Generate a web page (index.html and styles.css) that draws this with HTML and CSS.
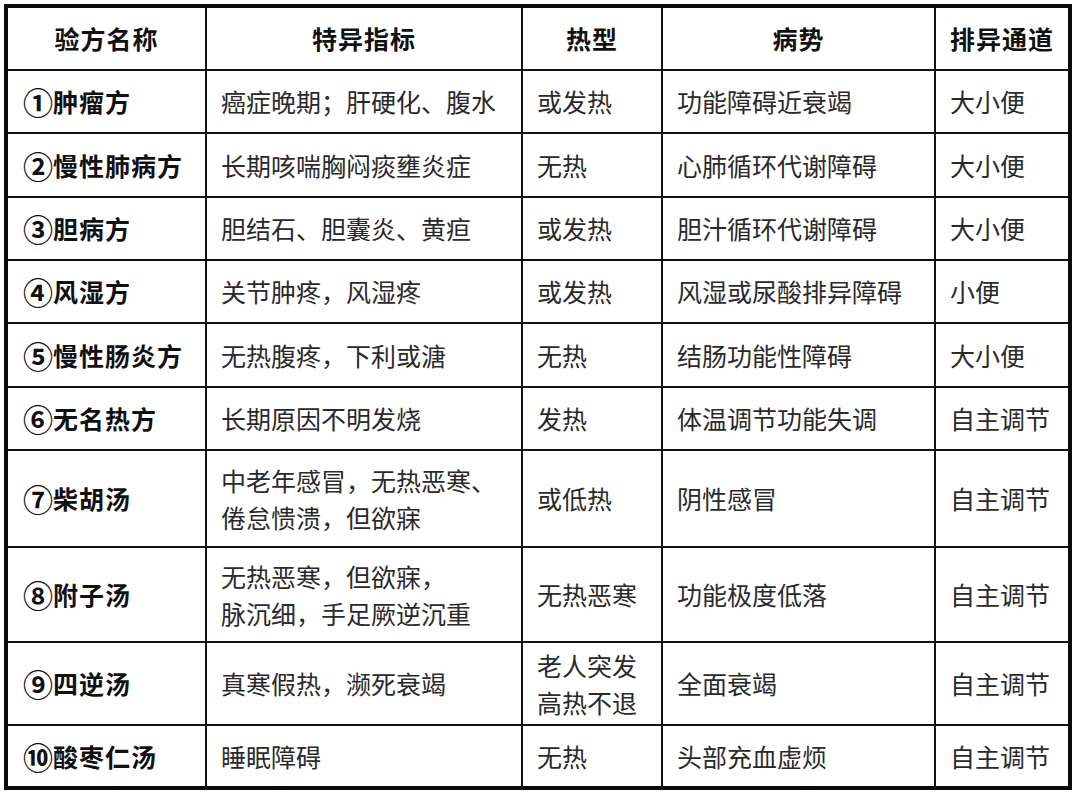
FILE: index.html
```html
<!DOCTYPE html>
<html lang="zh-CN">
<head>
<meta charset="utf-8">
<title>验方表</title>
<link rel="stylesheet" href="styles.css">
</head>
<body>
<div class="wrap">
<table class="grid">
  <colgroup>
    <col class="c1"><col class="c2"><col class="c3"><col class="c4"><col class="c5">
  </colgroup>
  <thead>
    <tr class="h64">
      <th>验方名称</th><th>特异指标</th><th>热型</th><th>病势</th><th>排异通道</th>
    </tr>
  </thead>
  <tbody>
    <tr class="h63"><td class="name"><span class="num">①</span>肿瘤方</td><td>癌症晚期；肝硬化、腹水</td><td>或发热</td><td>功能障碍近衰竭</td><td>大小便</td></tr>
    <tr class="h64"><td class="name"><span class="num">②</span>慢性肺病方</td><td>长期咳喘胸闷痰壅炎症</td><td>无热</td><td>心肺循环代谢障碍</td><td>大小便</td></tr>
    <tr class="h63"><td class="name"><span class="num">③</span>胆病方</td><td>胆结石、胆囊炎、黄疸</td><td>或发热</td><td>胆汁循环代谢障碍</td><td>大小便</td></tr>
    <tr class="h63"><td class="name"><span class="num">④</span>风湿方</td><td>关节肿疼，风湿疼</td><td>或发热</td><td>风湿或尿酸排异障碍</td><td>小便</td></tr>
    <tr class="h64"><td class="name"><span class="num">⑤</span>慢性肠炎方</td><td>无热腹疼，下利或溏</td><td>无热</td><td>结肠功能性障碍</td><td>大小便</td></tr>
    <tr class="h63"><td class="name"><span class="num">⑥</span>无名热方</td><td>长期原因不明发烧</td><td>发热</td><td>体温调节功能失调</td><td>自主调节</td></tr>
    <tr class="h97"><td class="name"><span class="num">⑦</span>柴胡汤</td><td>中老年感冒，无热恶寒、<br>倦怠愦溃，但欲寐</td><td>或低热</td><td>阴性感冒</td><td>自主调节</td></tr>
    <tr class="h95"><td class="name"><span class="num">⑧</span>附子汤</td><td>无热恶寒，但欲寐，<br>脉沉细，手足厥逆沉重</td><td>无热恶寒</td><td>功能极度低落</td><td>自主调节</td></tr>
    <tr class="h83"><td class="name"><span class="num">⑨</span>四逆汤</td><td>真寒假热，濒死衰竭</td><td>老人突发<br>高热不退</td><td>全面衰竭</td><td>自主调节</td></tr>
    <tr class="h63"><td class="name"><span class="num">⑩</span>酸枣仁汤</td><td>睡眠障碍</td><td>无热</td><td>头部充血虚烦</td><td>自主调节</td></tr>
  </tbody>
</table>
</div>
</body>
</html>
```

FILE: styles.css
```css
html, body {
  margin: 0;
  padding: 0;
  background: #ffffff;
}
body {
  font-family: "Noto Sans CJK SC", "Noto Sans", sans-serif;
  color: #2a2a2a;
}
.wrap {
  padding: 4px 0 0 4px;
}
.grid {
  border-collapse: collapse;
  table-layout: fixed;
  width: 1068px;
  border: 4px solid #0a0a0a;
}
.c1 { width: 200px; }
.c2 { width: 316px; }
.c3 { width: 140px; }
.c4 { width: 273px; }
.c5 { width: 135px; }
.grid th, .grid td {
  border: 2px solid #111111;
  font-size: 25px;
  line-height: 37px;
  vertical-align: middle;
  padding: 0 0 0 14px;
  white-space: nowrap;
  overflow: hidden;
}
.grid th {
  font-weight: 700;
  color: #111111;
  text-align: center;
  padding: 0;
  letter-spacing: 1px;
}
.grid td {
  font-weight: 400;
  text-align: left;
}
.grid td.name {
  font-weight: 700;
  color: #111111;
  padding-left: 15px;
  letter-spacing: 1px;
}
.num {
  font-size: 30px;
  font-weight: 700;
  line-height: 1;
  vertical-align: -2px;
  letter-spacing: 0;
}
.h63 { height: 63px; }
.h64 { height: 64px; }
.h83 { height: 83px; }
.h95 { height: 95px; }
.h97 { height: 97px; }
```
